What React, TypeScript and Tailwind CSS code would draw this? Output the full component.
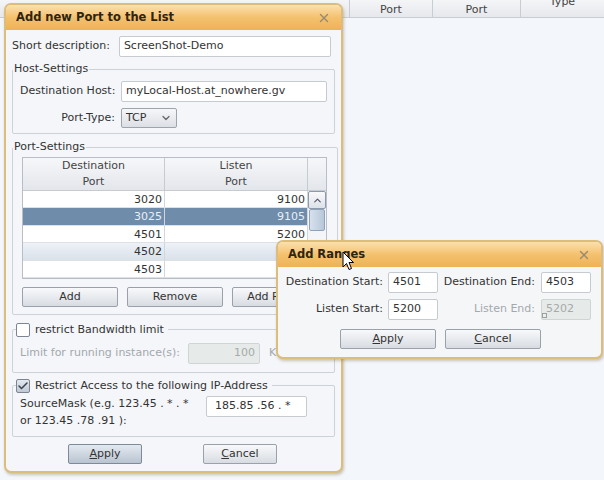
import React from 'react';
import { X, ChevronDown, ChevronUp, Check } from 'lucide-react';

const font = "font-['DejaVu_Sans',sans-serif]";

const Input = ({ value, className = '', disabled = false }: { value: string; className?: string; disabled?: boolean }) => (
  <div
    className={`h-[21px] border rounded-[2px] px-[4px] flex items-center text-[11px] ${
      disabled ? 'bg-[#e6eae8] border-[#cfd5d2] text-[#a5aaa8]' : 'bg-white border-[#c6cbd2] text-[#333]'
    } ${className}`}
  >
    {value}
  </div>
);

const Btn = ({ label, u, className = '', main = false }: { label: string; u?: boolean; className?: string; main?: boolean }) => (
  <div
    className={`h-[20px] border rounded-[2px] flex items-center justify-center text-[11px] text-[#333] ${
      main
        ? 'border-[#7f8a99] bg-gradient-to-b from-[#e3e9f0] to-[#b9c4d1]'
        : 'border-[#9aa1ab] bg-gradient-to-b from-[#f8f9fb] to-[#d8dce2]'
    } ${className}`}
  >
    {u ? (
      <span>
        <span className="underline">{label[0]}</span>
        {label.slice(1)}
      </span>
    ) : (
      label
    )}
  </div>
);

const TitleBar = ({ title }: { title: string }) => (
  <div className="h-[25px] flex items-center justify-between px-[10px] bg-gradient-to-b from-[#fbe0ad] via-[#f4c16e] to-[#eeb256] rounded-t-[5px]">
    <span className="text-[11.5px] font-bold text-[#2f2410]">{title}</span>
    <X size={14} strokeWidth={2.5} className="text-[#9a8a70]" />
  </div>
);

const Box = ({ checked }: { checked: boolean }) => (
  <div
    className={`w-[14px] h-[14px] border border-[#7d8592] rounded-[2px] flex items-center justify-center ${
      checked ? 'bg-gradient-to-b from-[#e4e9ef] to-[#bfc9d5]' : 'bg-white'
    }`}
  >
    {checked && <Check size={12} strokeWidth={3} className="text-[#3a4250]" />}
  </div>
);

const rows = [
  ['3020', '9100', ''],
  ['3025', '9105', 'sel'],
  ['4501', '5200', ''],
  ['4502', '', 'hover'],
  ['4503', '', ''],
];

function MainDialog() {
  return (
    <div className="absolute left-[4px] top-[3px] w-[339px] h-[470px] border-2 border-[#dcbd7c] rounded-[7px] bg-[#f4f6f9] shadow-[1px_2px_3px_rgba(120,100,60,0.35)] flex flex-col">
      <TitleBar title="Add new Port to the List" />
      <div className="flex flex-col px-[6px] pt-[6px] text-[#333] text-[11px]">
        <div className="flex items-center gap-[9px]">
          <span>Short description:</span>
          <Input value="ScreenShot-Demo" className="w-[212px]" />
        </div>

        <fieldset className="mt-[5px] border border-[#cdd1d8] rounded-[2px] px-[7px] pb-[5px]">
          <legend className="px-[1px] -ml-[7px] leading-[14px]">Host-Settings</legend>
          <div className="flex items-center mt-[5px]">
            <span className="w-[101px]">Destination Host:</span>
            <Input value="myLocal-Host.at_nowhere.gv" className="w-[206px]" />
          </div>
          <div className="flex items-center mt-[6px]">
            <span className="w-[101px] text-right pr-[6px]">Port-Type:</span>
            <div className="w-[56px] h-[20px] border border-[#9da4ae] rounded-[2px] bg-gradient-to-b from-[#f6f7f9] to-[#dcdfe4] flex items-center justify-between px-[4px]">
              <span>TCP</span>
              <ChevronDown size={12} strokeWidth={2.5} className="text-[#666]" />
            </div>
          </div>
        </fieldset>

        <fieldset className="mt-[6px] border border-[#cdd1d8] rounded-[2px] px-[9px] pb-[7px]">
          <legend className="px-[1px] -ml-[9px] leading-[14px]">Port-Settings</legend>
          <div className="mt-[3px] w-[305px] border border-[#b9bec6] bg-white">
            <div className="flex h-[33px] bg-gradient-to-b from-[#f6f7f9] to-[#e3e6eb] border-b border-[#c6cbd2] text-[#444] leading-[16px]">
              <div className="w-[142px] border-r border-[#c6cbd2] flex flex-col items-center justify-center">
                <span>Destination</span>
                <span>Port</span>
              </div>
              <div className="w-[143px] border-r border-[#c6cbd2] flex flex-col items-center justify-center">
                <span>Listen</span>
                <span>Port</span>
              </div>
              <div className="flex-1" />
            </div>
            <div className="flex">
              <div className="flex-1">
                {rows.map(([a, b, s]) => (
                  <div
                    key={a}
                    className={`flex h-[17.4px] border-b border-[#dde1e6] ${
                      s === 'sel'
                        ? 'bg-[#6f8cab] text-[#e9eef5]'
                        : s === 'hover'
                        ? 'bg-gradient-to-b from-[#eef2f7] to-[#d9e1ea]'
                        : ''
                    }`}
                  >
                    <div className="w-[142px] border-r border-[#d3d7dd] text-right pr-[2px] leading-[17px]">{a}</div>
                    <div className="flex-1 text-right pr-[2px] leading-[17px]">{b}</div>
                  </div>
                ))}
              </div>
              <div className="w-[19px] flex flex-col bg-[#f3f5f8] border-l border-[#d3d7dd]">
                <div className="h-[18px] border border-[#8e9aab] rounded-[2px] bg-gradient-to-b from-[#f8f9fb] to-[#dde2e8] flex items-center justify-center">
                  <ChevronUp size={11} strokeWidth={2.5} className="text-[#556]" />
                </div>
                <div className="h-[22px] mx-[1px] border border-[#8ea3bb] rounded-[2px] bg-gradient-to-r from-[#d7e1ec] to-[#b7c7d9]" />
              </div>
            </div>
          </div>
          <div className="flex gap-[9px] mt-[8px]">
            <Btn label="Add" className="w-[96px]" />
            <Btn label="Remove" className="w-[96px]" />
            <Btn label="Add Ranges" className="w-[96px]" />
          </div>
        </fieldset>

        <fieldset className="mt-[8px] border border-[#cdd1d8] rounded-[2px] px-[7px] pb-[8px]">
          <legend className="-ml-[4px] pr-[4px] flex items-center gap-[5px] leading-[14px]">
            <Box checked={false} />
            <span>restrict Bandwidth limit</span>
          </legend>
          <div className="flex items-center text-[#a3a8ad] mt-[6px]">
            <span className="w-[168px]">Limit for running instance(s):</span>
            <Input value="100" disabled className="w-[72px] justify-end" />
            <span className="ml-[9px]">KB/s</span>
          </div>
        </fieldset>

        <fieldset className="mt-[6px] border border-[#cdd1d8] rounded-[2px] px-[7px] pb-[7px]">
          <legend className="-ml-[4px] pr-[4px] flex items-center gap-[5px] leading-[14px]">
            <Box checked />
            <span>Restrict Access to the following IP-Address</span>
          </legend>
          <div className="flex items-start mt-[2px]">
            <div className="w-[186px] leading-[17px]">
              <div>SourceMask (e.g. 123.45 . * . *</div>
              <div>or 123.45 .78 .91 ):</div>
            </div>
            <Input value="185.85 .56 . *" className="w-[101px] mt-[1px] pl-[8px]" />
          </div>
        </fieldset>

        <div className="flex justify-center gap-[61px] mt-[7px] -ml-[2px]">
          <Btn label="Apply" u main className="w-[74px]" />
          <Btn label="Cancel" u className="w-[74px]" />
        </div>
      </div>
    </div>
  );
}

function RangesDialog() {
  return (
    <div className="absolute left-[276px] top-[240px] w-[327px] h-[119px] border-2 border-[#dcbd7c] rounded-[7px] bg-[#f5f6f8] shadow-[1px_2px_3px_rgba(120,100,60,0.35)] flex flex-col">
      <TitleBar title="Add Ranges" />
      <div className="flex flex-col px-[4px] pt-[5px] text-[11px] text-[#333]">
        <div className="flex items-center">
          <span className="w-[106px] text-right pr-[5px]">Destination Start:</span>
          <Input value="4501" className="w-[50px]" />
          <span className="w-[103px] text-right pr-[6px]">Destination End:</span>
          <Input value="4503" className="w-[50px]" />
        </div>
        <div className="flex items-center mt-[6px]">
          <span className="w-[106px] text-right pr-[5px]">Listen Start:</span>
          <Input value="5200" className="w-[50px]" />
          <span className="w-[103px] text-right pr-[6px] text-[#a3a8ad]">Listen End:</span>
          <div className="relative">
            <Input value="5202" disabled className="w-[50px]" />
            <div className="absolute left-[1px] bottom-[2px] w-[5px] h-[5px] border border-[#9aa0a0] bg-[#eef0f0]" />
          </div>
        </div>
        <div className="flex justify-center gap-[9px] mt-[9px] ml-[2px]">
          <Btn label="Apply" u className="w-[96px]" />
          <Btn label="Cancel" u className="w-[96px]" />
        </div>
      </div>
    </div>
  );
}

export default function App() {
  return (
    <div className={`relative w-[604px] h-[480px] overflow-hidden bg-[#f3f6fb] ${font}`}>
      <div className="flex h-[18px] bg-gradient-to-b from-[#f4f5f7] to-[#e6e8ec] border-b border-[#c9cdd3] text-[11px] text-[#444]">
        <div className="w-[350px] border-r border-[#c9cdd3]" />
        <div className="w-[83px] border-r border-[#c9cdd3] flex items-end justify-center leading-[15px]">Port</div>
        <div className="w-[88px] border-r border-[#c9cdd3] flex items-end justify-center leading-[15px]">Port</div>
        <div className="flex-1 flex justify-center leading-[15px] -mt-[6px]">Type</div>
      </div>
      <MainDialog />
      <RangesDialog />
      <svg className="absolute left-[342px] top-[251px]" width="13" height="20" viewBox="0 0 13 20">
        <path d="M1 1 L1 16 L4.5 12.5 L7 18.5 L9.5 17.5 L7 11.5 L11.5 11.5 Z" fill="white" stroke="black" strokeWidth="1" strokeLinejoin="round" />
      </svg>
    </div>
  );
}
